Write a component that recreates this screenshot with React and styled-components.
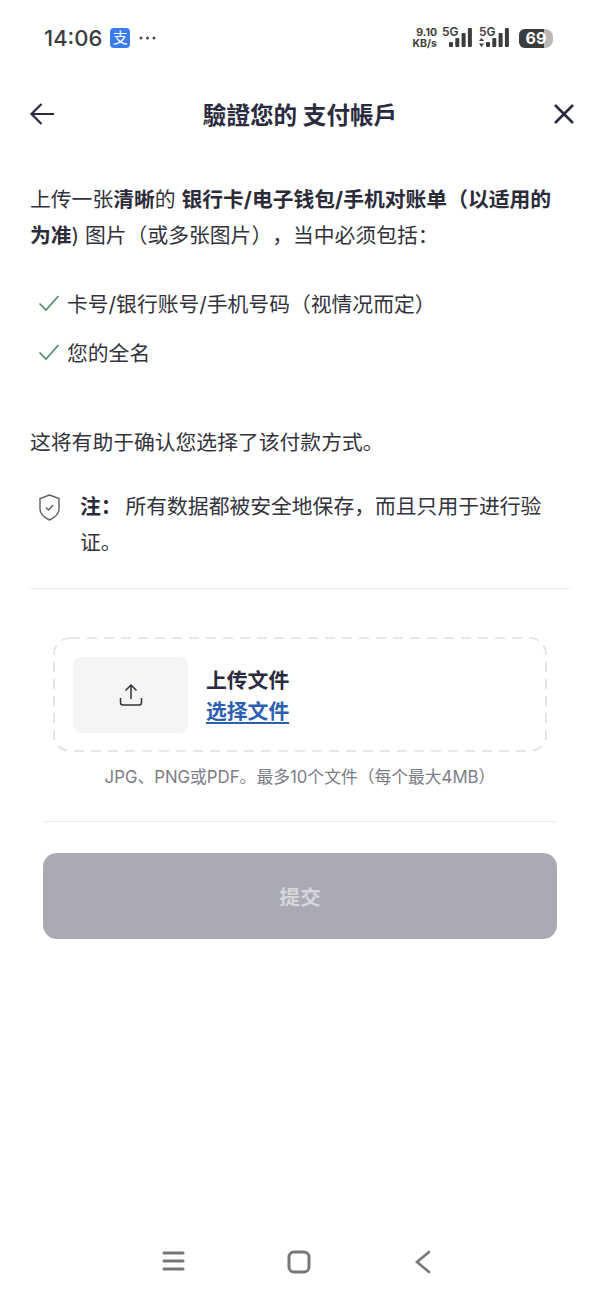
import React from "react";
import styled, { createGlobalStyle } from "styled-components";

const GlobalStyle = createGlobalStyle`
  html, body {
    margin: 0;
    padding: 0;
    background: #fff;
    font-family: "Inter", "Noto Sans CJK SC", sans-serif;
    text-spacing-trim: space-all;
  }
`;

const Page = styled.div`
  width: 600px;
  height: 1299px;
  display: flex;
  flex-direction: column;
  overflow: hidden;
  background: #fff;
  color: #33333d;
`;

// status bar
const StatusBar = styled.div`
  height: 76px;
  flex: none;
  display: flex;
  align-items: center;
  padding: 0 47px 0 44px;
  color: #3c3c3e;
`;

const Clock = styled.span`
  font-family: "Inter", sans-serif;
  font-size: 22px;
  font-weight: 500;
`;

const AlipayBadge = styled.span`
  width: 20px;
  height: 20px;
  margin-left: 8px;
  border-radius: 4px;
  background: #3b7cf0;
  color: #fff;
  font-size: 15px;
  line-height: 20px;
  text-align: center;
`;

const Dots = styled.svg`
  margin-left: 9px;
`;

const StatusRight = styled.div`
  margin-left: auto;
  display: flex;
  align-items: center;
  gap: 5px;
`;

const Speed = styled.div`
  font-family: "Inter", sans-serif;
  font-size: 10.5px;
  font-weight: 700;
  line-height: 11px;
  text-align: right;
`;

const Network = styled.div`
  position: relative;
  display: flex;
  align-items: flex-end;
  height: 22px;
`;

const NetLabel = styled.span`
  position: absolute;
  left: 0;
  top: -2px;
  font-family: "Inter", sans-serif;
  font-size: 12px;
  font-weight: 600;
  line-height: 13px;
`;

const Battery = styled.div`
  position: relative;
  width: 34px;
  height: 19px;
  margin-left: 3px;
  border-radius: 6px 8px 8px 6px;
  overflow: hidden;
  background: #b9b9b9;
`;

const BatteryLevel = styled.div`
  height: 100%;
  background: #3c3c3e;
`;

const BatteryText = styled.span`
  position: absolute;
  inset: 0;
  color: #fff;
  font-family: "Inter", sans-serif;
  font-size: 16px;
  font-weight: 700;
  line-height: 19px;
  text-align: center;
`;

// header
const Header = styled.header`
  height: 76px;
  flex: none;
  display: flex;
  align-items: center;
  justify-content: space-between;
  padding: 0 22px 0 29px;
`;

const Title = styled.h1`
  margin: 0 7px 0 0;
  font-size: 23.6px;
  font-weight: 700;
  color: #2b2b40;
`;

const IconButton = styled.button`
  width: 28px;
  height: 28px;
  padding: 0;
  border: 0;
  background: none;
  display: flex;
  align-items: center;
  justify-content: center;
`;

// body copy
const Content = styled.main`
  padding: 30px 30px 0;
`;

const Paragraph = styled.p`
  margin: 0;
  font-size: 20.8px;
  line-height: 36px;
  color: #33333d;
  strong {
    font-weight: 700;
    color: #2b2b3a;
  }
`;

const CheckList = styled.ul`
  list-style: none;
  margin: 31px 0 0;
  padding: 0 0 0 8px;
`;

const CheckItem = styled.li`
  display: flex;
  align-items: center;
  gap: 7px;
  height: 36px;
  font-size: 20.8px;
  & + & {
    margin-top: 13px;
  }
`;

const Confirm = styled(Paragraph)`
  margin-top: 55px;
`;

const Note = styled.div`
  display: flex;
  gap: 20px;
  margin: 28px 0 0 9px;
  padding-bottom: 27px;
`;

const NoteIcon = styled.svg`
  flex: none;
  margin-top: 5px;
`;

const NoteLabel = styled.strong`
  margin-right: -2px;
`;

const Divider = styled.hr`
  margin: 0;
  border: 0;
  border-top: 1px solid #ececee;
`;

// upload
const Dropzone = styled.div`
  margin: 48px 53px 0;
  height: 115px;
  box-sizing: border-box;
  position: relative;
  display: flex;
  align-items: center;
  gap: 18px;
  padding: 0 20px;
`;

const DashBorder = styled.svg`
  position: absolute;
  inset: 0;
`;

const UploadTile = styled.div`
  position: relative;
  width: 115px;
  height: 76px;
  border-radius: 8px;
  background: #f5f5f6;
  display: flex;
  align-items: center;
  justify-content: center;
`;

const UploadText = styled.div`
  position: relative;
  display: flex;
  flex-direction: column;
  padding-top: 2px;
  font-size: 20.8px;
  line-height: 31px;
  font-weight: 700;
`;

const UploadTitle = styled.span`
  color: #2b2b40;
`;

const UploadLink = styled.a`
  color: #2d5fb0;
  text-decoration: underline;
  text-underline-offset: 3px;
`;

const Hint = styled.p`
  margin: 13px 0 0;
  text-align: center;
  font-size: 16.8px;
  line-height: 24px;
  color: #7c7c86;
`;

const Footer = styled.div`
  margin: 32px 43px 0;
`;

const Submit = styled.button`
  display: block;
  width: 100%;
  height: 86px;
  margin-top: 31px;
  border: 0;
  border-radius: 14px;
  background: #a9aab4;
  color: #d6d6db;
  font-family: inherit;
  font-size: 20.8px;
  font-weight: 700;
`;

const NavBar = styled.nav`
  margin-top: auto;
  height: 49px;
  flex: none;
  display: flex;
  align-items: flex-start;
  padding: 0 169px 0 162px;
  justify-content: space-between;
`;

const NavHome = styled.svg`
  margin-left: -3px;
`;

const Check = () => (
  <svg width="22" height="18" viewBox="0 0 22 18" fill="none">
    <path d="M1.5 9.5l6.5 6.5L20.5 2" stroke="#4d8a63" strokeWidth="1.6" />
  </svg>
);

const signal = (x, heights) =>
  heights.map((h, i) => (
    <rect key={i} x={x + i * 6.3} y={20 - h} width="4" height={h} rx="1" fill="#3c3c3e" />
  ));

const App = () => (
  <Page>
    <GlobalStyle />
    <StatusBar>
      <Clock>14:06</Clock>
      <AlipayBadge>支</AlipayBadge>
      <Dots width="17" height="4" viewBox="0 0 17 4" fill="#4a4a4e">
        <circle cx="2" cy="2" r="1.5" />
        <circle cx="8.5" cy="2" r="1.5" />
        <circle cx="15" cy="2" r="1.5" />
      </Dots>
      <StatusRight>
        <Speed>
          9.10
          <br />
          KB/s
        </Speed>
        <Network>
          <NetLabel>5G</NetLabel>
          <svg width="32" height="22" viewBox="0 0 32 22">
            {signal(7, [5, 9, 14, 19])}
          </svg>
        </Network>
        <Network>
          <NetLabel>5G</NetLabel>
          <svg width="32" height="22" viewBox="0 0 32 22">
            <path d="M0 14l2.5-3 2.5 3zM0 16.5h5L2.5 20z" fill="#3c3c3e" />
            {signal(7, [5, 9, 14, 19])}
          </svg>
        </Network>
        <Battery>
          <BatteryLevel style={{ width: "74%" }} />
          <BatteryText>69</BatteryText>
        </Battery>
      </StatusRight>
    </StatusBar>

    <Header>
      <IconButton aria-label="返回">
        <svg width="28" height="24" viewBox="0 0 28 24" fill="none" stroke="#2b2b40" strokeWidth="2.2">
          <path d="M25 12H3M12.5 2L2.5 12l10 10" />
        </svg>
      </IconButton>
      <Title>驗證您的 支付帳戶</Title>
      <IconButton aria-label="关闭">
        <svg width="24" height="24" viewBox="0 0 24 24" fill="none" stroke="#2b2b40" strokeWidth="2.6">
          <path d="M3 3l18 18M21 3L3 21" />
        </svg>
      </IconButton>
    </Header>

    <Content>
      <Paragraph>
        上传一张<strong>清晰</strong>的 <strong>银行卡/电子钱包/手机对账单（以适用的为准</strong>) 图片（或多张图片），当中必须包括：
      </Paragraph>
      <CheckList>
        <CheckItem>
          <Check />
          卡号/银行账号/手机号码（视情况而定）
        </CheckItem>
        <CheckItem>
          <Check />
          您的全名
        </CheckItem>
      </CheckList>
      <Confirm>这将有助于确认您选择了该付款方式。</Confirm>
      <Note>
        <NoteIcon width="21" height="27" viewBox="0 0 21 27" fill="none" stroke="#5f5f68" strokeWidth="1.4">
          <path d="M10.500 1L20 4.500V15c0 5-4 8.500-9.500 11C5 23.500 1 20 1 15V4.500z" />
          <path d="M7 13.500l2.500 2.500 4.500-5" />
        </NoteIcon>
        <Paragraph>
          <NoteLabel>注：</NoteLabel> 所有数据都被安全地保存，而且只用于进行验证。
        </Paragraph>
      </Note>
      <Divider />
    </Content>

    <Dropzone>
      <DashBorder width="494" height="115" viewBox="0 0 494 115" fill="none">
        <rect x="1" y="1" width="492" height="113" rx="16" stroke="#dfdfe2" strokeWidth="1.6" strokeDasharray="10 7" />
      </DashBorder>
      <UploadTile>
        <svg width="24" height="24" viewBox="0 0 24 24" fill="none" stroke="#33333d" strokeWidth="1.5">
          <path d="M12 16V2M6.500 7.500L12 2l5.500 5.500M1.500 15v4.500c0 1.500 1 2.500 2.500 2.500h16c1.500 0 2.500-1 2.500-2.500V15" />
        </svg>
      </UploadTile>
      <UploadText>
        <UploadTitle>上传文件</UploadTitle>
        <UploadLink>选择文件</UploadLink>
      </UploadText>
    </Dropzone>
    <Hint>JPG、PNG或PDF。最多10个文件（每个最大4MB）</Hint>

    <Footer>
      <Divider />
      <Submit>提交</Submit>
    </Footer>

    <NavBar>
      <svg width="24" height="22" viewBox="0 0 24 22" fill="none" stroke="#77777b" strokeWidth="3" strokeLinecap="round">
        <path d="M2 3h19M2 11h19M2 19h19" />
      </svg>
      <NavHome width="24" height="24" viewBox="0 0 24 24" fill="none" stroke="#77777b" strokeWidth="3">
        <rect x="2" y="2" width="20" height="20" rx="5" />
      </NavHome>
      <svg width="16" height="24" viewBox="0 0 16 24" fill="none" stroke="#77777b" strokeWidth="2.6" strokeLinecap="round">
        <path d="M14 2L2 12l12 10" />
      </svg>
    </NavBar>
  </Page>
);

export default App;
